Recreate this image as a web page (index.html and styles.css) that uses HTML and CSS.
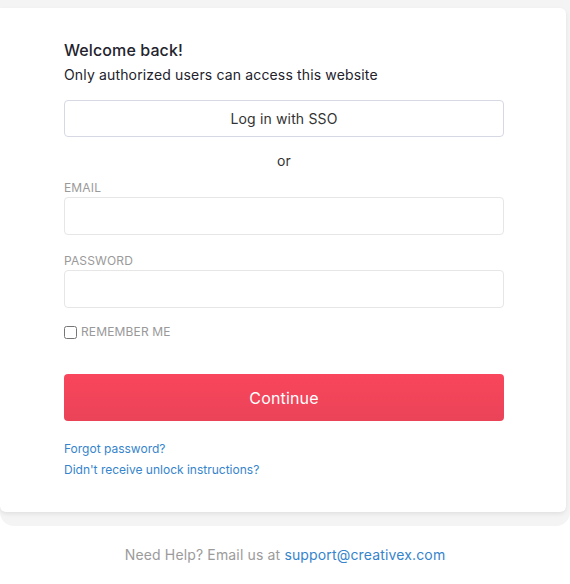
FILE: index.html
```html
<!DOCTYPE html>
<html>
<head>
<meta charset="utf-8">
<link rel="stylesheet" href="styles.css">
</head>
<body>
<div class="backdrop">
  <div class="card">
    <h1 class="title">Welcome back!</h1>
    <p class="subtitle">Only authorized users can access this website</p>
    <button class="sso">Log in with SSO</button>
    <div class="or">or</div>
    <label class="label">EMAIL</label>
    <input class="field" type="text">
    <label class="label">PASSWORD</label>
    <input class="field" type="password">
    <div class="remember">
      <input type="checkbox" class="check">
      <span>REMEMBER ME</span>
    </div>
    <button class="continue">Continue</button>
    <div class="links">
      <a href="#">Forgot password?</a>
      <a href="#">Didn't receive unlock instructions?</a>
    </div>
  </div>
</div>
<p class="help">Need Help? Email us at <a href="#">support@creativex.com</a></p>
</body>
</html>
```
FILE: styles.css
```css
* { box-sizing: border-box; }
html, body { margin: 0; padding: 0; background: #fff; }
body { font-family: Inter, "Noto Sans", sans-serif; color: #1f1f2a; letter-spacing: 0.15px; }
.backdrop {
  background: #f4f4f5;
  padding: 8px 4px 14px 0;
  border-radius: 0 0 14px 14px;
}
.card {
  background: #fff;
  border-radius: 0 6px 6px 6px;
  box-shadow: 0 2px 4px rgba(0,0,0,0.08);
  padding: 32px 62px 34px 64px;
  display: flex;
  flex-direction: column;
}
.title {
  margin: 0;
  font-size: 16px;
  font-weight: 500;
  line-height: 20px;
  color: #23232d;
  letter-spacing: 0.1px;
}
.subtitle {
  margin: 5px 0 0;
  font-size: 14px;
  line-height: 20px;
  color: #22222c;
}
.sso {
  margin-top: 15px;
  height: 37px;
  border: 1px solid #d6d9e4;
  border-radius: 4px;
  background: #fff;
  font-family: inherit;
  letter-spacing: inherit;
  font-size: 14px;
  color: #333;
}
.or {
  text-align: center;
  font-size: 14px;
  line-height: 20px;
  margin-top: 14px;
  color: #333;
}
.label {
  font-size: 12px;
  line-height: 16px;
  color: #9a9a9a;
  margin-top: 9px;
}
.field {
  margin-top: 1px;
  height: 38px;
  border: 1px solid #e6e6e6;
  border-radius: 4px;
  background: #fff;
  margin-bottom: 18px;
}
.field + .label { margin-top: 0; }
.field + .remember { margin-top: -2px; }
.remember {
  display: flex;
  align-items: center;
  gap: 4px;
  font-size: 12px;
  color: #999;
  line-height: 16px;
}
.check {
  margin: 0;
  width: 13px;
  height: 13px;
}
.continue {
  margin-top: 34px;
  height: 47px;
  border: none;
  border-radius: 4px;
  background: linear-gradient(#f9465c, #ea4358);
  color: #fff;
  font-family: inherit;
  letter-spacing: inherit;
  font-size: 16px;
}
.links {
  margin-top: 20px;
  display: flex;
  flex-direction: column;
  gap: 5px;
  font-size: 12px;
  line-height: 16px;
  letter-spacing: 0;
}
.links a, .help a { color: #3584cc; text-decoration: none; }
.links a { align-self: flex-start; }
.help {
  margin: 20px 0 0;
  text-align: center;
  font-size: 14px;
  line-height: 18px;
  color: #9b9b9b;
}
```
